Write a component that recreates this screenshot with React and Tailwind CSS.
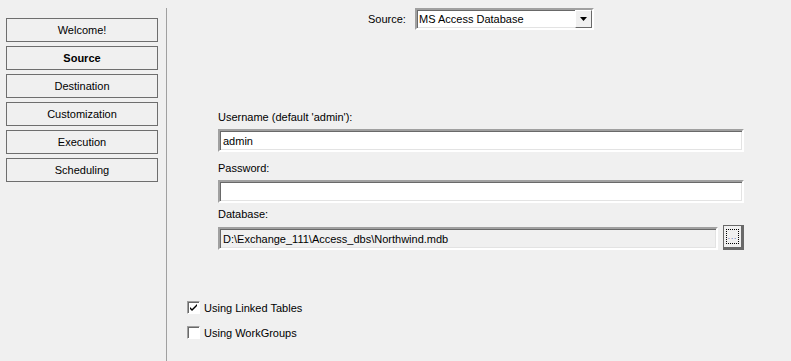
import React from "react";

const steps = ["Welcome!", "Source", "Destination", "Customization", "Execution", "Scheduling"];

const sunken =
  "border-2 border-t-[#a0a0a0] border-l-[#a0a0a0] border-b-white border-r-white shadow-[inset_1px_1px_0_#696969,inset_-1px_-1px_0_#e3e3e3]";

const Checkbox = ({ checked, label }) => (
  <label className="flex items-center gap-[4px] h-[13px]">
    <span className="w-[13px] h-[13px] bg-white border border-t-[#a0a0a0] border-l-[#a0a0a0] border-b-white border-r-white shadow-[inset_1px_1px_0_#696969] flex items-center justify-center">
      {checked && (
        <svg width="9" height="9" viewBox="0 0 9 9">
          <path d="M1 4 L3 6 L8 1 L8 3 L3 8 L1 6 Z" fill="#000" />
        </svg>
      )}
    </span>
    <span>{label}</span>
  </label>
);

const App = () => {
  return (
    <div
      className="w-[791px] h-[361px] bg-[#f0f0f0] text-[11px] leading-[14px] text-black flex overflow-hidden"
      style={{ fontFamily: "'Liberation Sans', Arial, sans-serif" }}
    >
      <div className="w-[166px] pt-[18px] pl-[6px] flex flex-col gap-[4px]">
        {steps.map((s) => (
          <div
            key={s}
            className={`w-[152px] h-[24px] border border-[#6e6e6e] flex items-center justify-center ${
              s === "Source" ? "font-bold" : ""
            }`}
          >
            {s}
          </div>
        ))}
      </div>

      <div className="mt-[8px] w-px bg-[#a0a0a0]" />

      <div className="flex-1">
        <div className="flex items-center pt-[8px] pl-[201px]">
          <span className="w-[47px]">Source:</span>
          <div className={`w-[179px] h-[22px] bg-white ${sunken} flex items-center`}>
            <span className="flex-1 pl-[2px]">MS Access Database</span>
            <div className="w-[17px] h-[18px] bg-[#f0f0f0] border border-t-white border-l-white border-b-[#696969] border-r-[#696969] flex items-center justify-center">
              <svg width="7" height="4" viewBox="0 0 7 4">
                <path d="M0 0 H7 L3.5 4 Z" fill="#000" />
              </svg>
            </div>
          </div>
        </div>

        <div className="pl-[51px] pr-[47px] pt-[80px] flex flex-col">
          <span className="h-[14px]">Username (default 'admin'):</span>
          <div className={`mt-[5px] h-[23px] bg-white ${sunken} flex items-center pl-[3px]`}>admin</div>
          <span className="mt-[9px] h-[14px]">Password:</span>
          <div className={`mt-[5px] h-[23px] bg-white ${sunken}`} />
          <span className="mt-[4px] h-[14px]">Database:</span>
          <div className="mt-[6px] flex gap-[5px] items-start">
            <div className={`flex-1 h-[23px] bg-[#f0f0f0] ${sunken} flex items-center pl-[3px]`}>
              D:\Exchange_111\Access_dbs\Northwind.mdb
            </div>
            <div className="w-[21px] h-[25px] mt-[-2px] border border-[#696969] border-b-[3px] border-r-[3px] bg-[#f0f0f0] flex items-center justify-center">
              <div className="w-[13px] h-[15px] border border-dotted border-black flex items-end justify-center pb-[2px]">
                <span className="text-[8px] leading-none text-[#3030a0] tracking-[1px]">...</span>
              </div>
            </div>
          </div>
        </div>

        <div className="pl-[20px] mt-[51px] flex flex-col gap-[12px]">
          <Checkbox checked label="Using Linked Tables" />
          <Checkbox label="Using WorkGroups" />
        </div>
      </div>
    </div>
  );
};

export default App;
